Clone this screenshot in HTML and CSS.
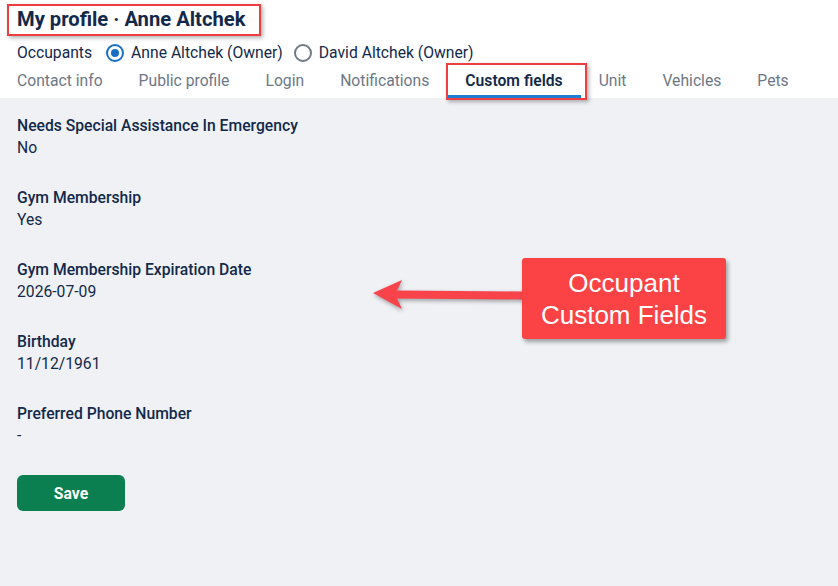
FILE: index.html
```html
<!DOCTYPE html>
<html lang="en">
<head>
<meta charset="utf-8">
<title>My profile · Anne Altchek</title>
<link rel="stylesheet" href="styles.css">
</head>
<body>
<header class="header">
  <h1 class="title">My profile · Anne Altchek</h1>
  <div class="occupants">
    <span class="occ-label">Occupants</span>
    <label class="radio-item"><span class="radio checked"></span>Anne Altchek (Owner)</label>
    <label class="radio-item"><span class="radio"></span>David Altchek (Owner)</label>
  </div>
  <nav class="tabs">
    <span class="tab">Contact info</span>
    <span class="tab">Public profile</span>
    <span class="tab">Login</span>
    <span class="tab">Notifications</span>
    <span class="tab active">Custom fields</span>
    <span class="tab">Unit</span>
    <span class="tab">Vehicles</span>
    <span class="tab">Pets</span>
  </nav>
</header>
<main class="content">
  <div class="field"><div class="field-label">Needs Special Assistance In Emergency</div><div class="field-value">No</div></div>
  <div class="field"><div class="field-label">Gym Membership</div><div class="field-value">Yes</div></div>
  <div class="field"><div class="field-label">Gym Membership Expiration Date</div><div class="field-value">2026-07-09</div></div>
  <div class="field"><div class="field-label">Birthday</div><div class="field-value">11/12/1961</div></div>
  <div class="field"><div class="field-label">Preferred Phone Number</div><div class="field-value">-</div></div>
  <button class="save">Save</button>
</main>

<div class="mark mark-title"></div>
<div class="mark mark-tab"></div>
<svg class="arrow" width="170" height="50" viewBox="0 0 170 50">
  <polygon points="3,23 32,10 27,20.5 154,21.5 154,29.5 27,28.5 32,39" fill="#f9434a"/>
</svg>
<div class="callout">Occupant<br>Custom Fields</div>
</body>
</html>
```
FILE: styles.css
```css
html, body {
  margin: 0;
  padding: 0;
}
body {
  font-family: Roboto, "Noto Sans", sans-serif;
  background: #eff1f5;
  color: #13294b;
  min-height: 586px;
  position: relative;
}
.header {
  background: #ffffff;
  padding: 0 17px;
  height: 98px;
  box-sizing: border-box;
}
.title {
  margin: 0;
  padding-top: 8px;
  font-size: 20.2px;
  font-weight: 700;
  line-height: 22px;
  color: #13294b;
}
.occupants {
  margin-top: 12px;
  display: flex;
  align-items: center;
  font-size: 15.7px;
  line-height: 22px;
  color: #13294b;
}
.occ-label {
  margin-right: 14px;
}
.radio-item {
  display: flex;
  align-items: center;
  gap: 7px;
  margin-right: 11px;
}
.radio {
  width: 18px;
  height: 18px;
  box-sizing: border-box;
  border: 2px solid #6f7a87;
  border-radius: 50%;
  display: flex;
  align-items: center;
  justify-content: center;
}
.radio.checked {
  border-color: #1a6fc4;
}
.radio.checked::after {
  content: "";
  width: 8px;
  height: 8px;
  border-radius: 50%;
  background: #1a6fc4;
}
.tabs {
  display: flex;
  margin-left: -18px;
}
.tab {
  padding: 6px 18px 3px;
  border-bottom: 3px solid transparent;
  font-size: 15.7px;
  line-height: 22px;
  color: #6d7886;
  white-space: nowrap;
}
.tab.active {
  color: #13294b;
  font-weight: 600;
  border-bottom-color: #1a7fd0;
}
.content {
  padding: 17px 17px 16px;
}
.field {
  margin-bottom: 28px;
  font-size: 15.7px;
  line-height: 22px;
}
.field-label {
  font-weight: 500;
  color: #13294b;
}
.field-value {
  color: #13294b;
}
.save {
  width: 108px;
  height: 36px;
  border: none;
  border-radius: 6px;
  background: #0b7f50;
  color: #ffffff;
  font-family: Roboto, "Noto Sans", sans-serif;
  font-weight: 700;
  font-size: 15.7px;
  padding: 0;
}
.mark {
  position: absolute;
  border: 2px solid #ee3e42;
  box-sizing: border-box;
  box-shadow: 2px 2px 4px rgba(0, 0, 0, 0.3);
}
.mark-title {
  left: 7px;
  top: 4px;
  width: 254px;
  height: 32px;
}
.mark-tab {
  left: 446px;
  top: 63px;
  width: 141px;
  height: 37px;
}
.arrow {
  position: absolute;
  left: 370px;
  top: 270px;
  filter: drop-shadow(1px 2px 2px rgba(0, 0, 0, 0.35));
}
.callout {
  position: absolute;
  left: 522px;
  top: 258px;
  width: 204px;
  height: 81px;
  box-sizing: border-box;
  padding-top: 8.5px;
  background: #fb4346;
  border-radius: 3px;
  box-shadow: 2px 3px 4px rgba(0, 0, 0, 0.35);
  color: #ffffff;
  font-family: "Liberation Sans", Arial, sans-serif;
  font-size: 26px;
  line-height: 32px;
  text-align: center;
}
```
